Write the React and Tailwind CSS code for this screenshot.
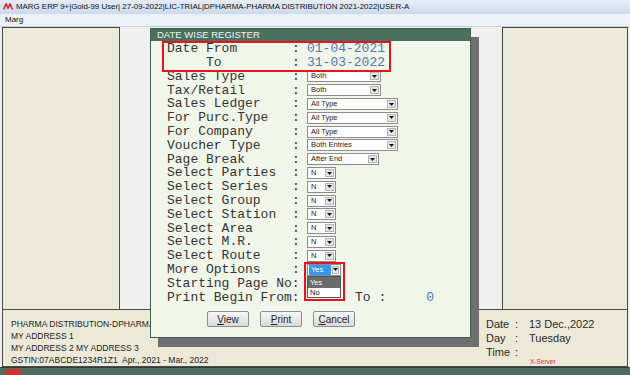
import React from 'react';

const sans = { fontFamily: '"Liberation Sans", Arial, sans-serif' };

const Arrow = () => (
  <span className="m-[1px] flex w-[9px] items-center justify-center border border-[#b5b5b5] bg-[#e6e6e6]">
    <svg width="5" height="3" viewBox="0 0 5 3">
      <path d="M0 0h5L2.5 3z" fill="#111" />
    </svg>
  </span>
);

const Drop = ({ text, w, hl }) => (
  <div className={`flex h-[12px] items-stretch border border-[#8c8c8c] bg-white ${w}`}>
    <span className="flex flex-1 items-center pl-[1px]">
      <span
        className={`px-[2px] text-[7.5px] leading-[10px] ${hl ? 'bg-[#3399ff] text-white w-[22px]' : 'text-[#222]'}`}
        style={sans}
      >
        {text}
      </span>
    </span>
    <Arrow />
  </div>
);

const rows = [
  ['Sales Type', <Drop text="Both" w="w-[74px]" />],
  ['Tax/Retail', <Drop text="Both" w="w-[74px]" />],
  ['Sales Ledger', <Drop text="All Type" w="w-[91px]" />],
  ['For Purc.Type', <Drop text="All Type" w="w-[91px]" />],
  ['For Company', <Drop text="All Type" w="w-[91px]" />],
  ['Voucher Type', <Drop text="Both Entries" w="w-[91px]" />],
  ['Page Break', <Drop text="After End" w="w-[72px]" />],
  ['Select Parties', <Drop text="N" w="w-[29px]" />],
  ['Select Series', <Drop text="N" w="w-[29px]" />],
  ['Select Group', <Drop text="N" w="w-[29px]" />],
  ['Select Station', <Drop text="N" w="w-[29px]" />],
  ['Select Area', <Drop text="N" w="w-[29px]" />],
  ['Select M.R.', <Drop text="N" w="w-[29px]" />],
  ['Select Route', <Drop text="N" w="w-[29px]" />],
];

const Row = ({ label, colon = true, children }) => (
  <div className="flex h-[13.8px] items-center">
    <span className="w-[125px] whitespace-pre">{label}</span>
    <span className="w-[15px]">{colon ? ':' : ''}</span>
    {children}
  </div>
);

const Btn = ({ first, rest }) => (
  <button
    className="flex h-[16px] w-[42px] items-center justify-center rounded-[2px] border border-[#8d8d8d] bg-gradient-to-b from-[#f7f7f7] to-[#dadada] text-[10px] text-[#1e1e1e]"
    style={sans}
  >
    <span className="underline">{first}</span>
    {rest}
  </button>
);

export default function App() {
  return (
    <div className="relative flex h-[375px] w-[630px] flex-col overflow-hidden bg-[#f0f0f0]" style={sans}>
      {/* title bar */}
      <div className="flex h-[14px] items-center gap-[3px] bg-gradient-to-b from-[#e6edf8] to-[#cbdaee] pl-[3px] text-[7.9px] text-[#111]">
        <svg width="10" height="7" viewBox="0 0 10 7">
          <path d="M0.5 6.5L3 1l2 4 2-4 2.5 5.5" fill="none" stroke="#e02020" strokeWidth="1.6" />
        </svg>
        <span>MARG ERP 9+|Gold-99 User| 27-09-2022|LIC-TRIAL|DPHARMA-PHARMA DISTRIBUTION 2021-2022|USER-A</span>
      </div>
      {/* menu bar */}
      <div className="flex h-[14px] items-center border-b border-[#c5ccd8] bg-[#edf1f8] pl-[5px] text-[8px] text-[#111]">
        Marg
      </div>

      {/* workspace */}
      <div className="flex flex-1 flex-col px-[2px]">
        <div className="flex h-[282px]">
          <div className="w-[118px] border border-b-0 border-[#4a4a4a] bg-[#ece9d8]" />
          <div className="flex-1 bg-[#f0f0f0]" />
          <div className="w-[126px] border border-b-0 border-[#4a4a4a] bg-[#ece9d8]" />
        </div>
        <div className="flex flex-1 justify-between border border-[#4a4a4a] bg-[#ece9d8]">
          <div className="flex flex-col pl-[8px] pt-[8px] text-[8.5px] leading-[12px] text-[#1c1c1c]">
            <span>PHARMA DISTRIBUTION-DPHARMA</span>
            <span>MY ADDRESS 1</span>
            <span>MY ADDRESS 2 MY ADDRESS 3</span>
            <span className="whitespace-pre">GSTIN:07ABCDE1234R1Z1  Apr., 2021 - Mar., 2022</span>
          </div>
          <div className="flex w-[148px] flex-col pl-[7px] pt-[7px] text-[11px] leading-[14px] text-[#2a2a2a]">
            <div className="flex">
              <span className="w-[29px]">Date</span>
              <span className="w-[14px]">:</span>
              <span>13 Dec.,2022</span>
            </div>
            <div className="flex">
              <span className="w-[29px]">Day</span>
              <span className="w-[14px]">:</span>
              <span>Tuesday</span>
            </div>
            <div className="flex">
              <span className="w-[29px]">Time</span>
              <span className="w-[14px]">:</span>
            </div>
            <span className="-mt-[1px] pl-[44px] text-[6.5px] leading-[8px] text-[#e53030]">X-Server</span>
          </div>
        </div>
      </div>

      {/* status bar */}
      <div className="flex h-[8px] border-t border-[#2f3f38] bg-[#4e6e62] pl-[5px]">
        <span className="mt-[1px] w-[17px] rounded-t-[3px] bg-[#d33131]" />
      </div>

      {/* dialog window */}
      <div className="absolute left-[150px] top-[28px] flex h-[310px] w-[321px] flex-col border border-[#3f5d50] bg-[#f1f6ea] shadow-[8px_9px_0_#6f6f6f]">
        <div className="flex h-[12px] items-center bg-[#4b7060] pl-[6px] text-[9.5px] text-[#eef4ef]">
          DATE WISE REGISTER
        </div>
        <div
          className="flex flex-col pl-[16px] pt-[1px] text-[13px] text-[#333]"
          style={{ fontFamily: '"Liberation Mono", "Courier New", monospace' }}
        >
          <Row label="Date From">
            <span className="text-[#5277ab]">01-04-2021</span>
          </Row>
          <Row label="     To">
            <span className="text-[#5277ab]">31-03-2022</span>
          </Row>
          {rows.map(([l, d]) => (
            <Row key={l} label={l}>
              {d}
            </Row>
          ))}
          <Row label="More Options">
            <div className="relative">
              <Drop text="Yes" w="w-[34px]" hl />
              <div className="absolute left-0 top-[12px] flex w-[34px] flex-col border border-[#555] bg-white text-[7.5px]" style={sans}>
                <span className="h-[11px] bg-[#6b6b6b] pl-[2px] leading-[11px] text-white">Yes</span>
                <span className="h-[9px] pl-[2px] leading-[9px] text-[#111]">No</span>
              </div>
            </div>
          </Row>
          <Row label="Starting Page No:" colon={false} />
          <Row label="Print Begin From:" colon={false}>
            <span className="ml-[48px] whitespace-pre">To :</span>
            <span className="ml-[40px] text-[#5277ab]">0</span>
          </Row>
        </div>
        <div className="mt-[7px] flex gap-[11px] pl-[56px]">
          <Btn first="V" rest="iew" />
          <Btn first="P" rest="rint" />
          <Btn first="C" rest="ancel" />
        </div>

        {/* highlight marks */}
        <div className="absolute left-[11px] top-[12px] h-[31px] w-[229px] border-2 border-[#e3141e]" />
        <div className="absolute left-[153px] top-[233px] h-[39px] w-[41px] border-2 border-[#e3141e]" />
      </div>
    </div>
  );
}
